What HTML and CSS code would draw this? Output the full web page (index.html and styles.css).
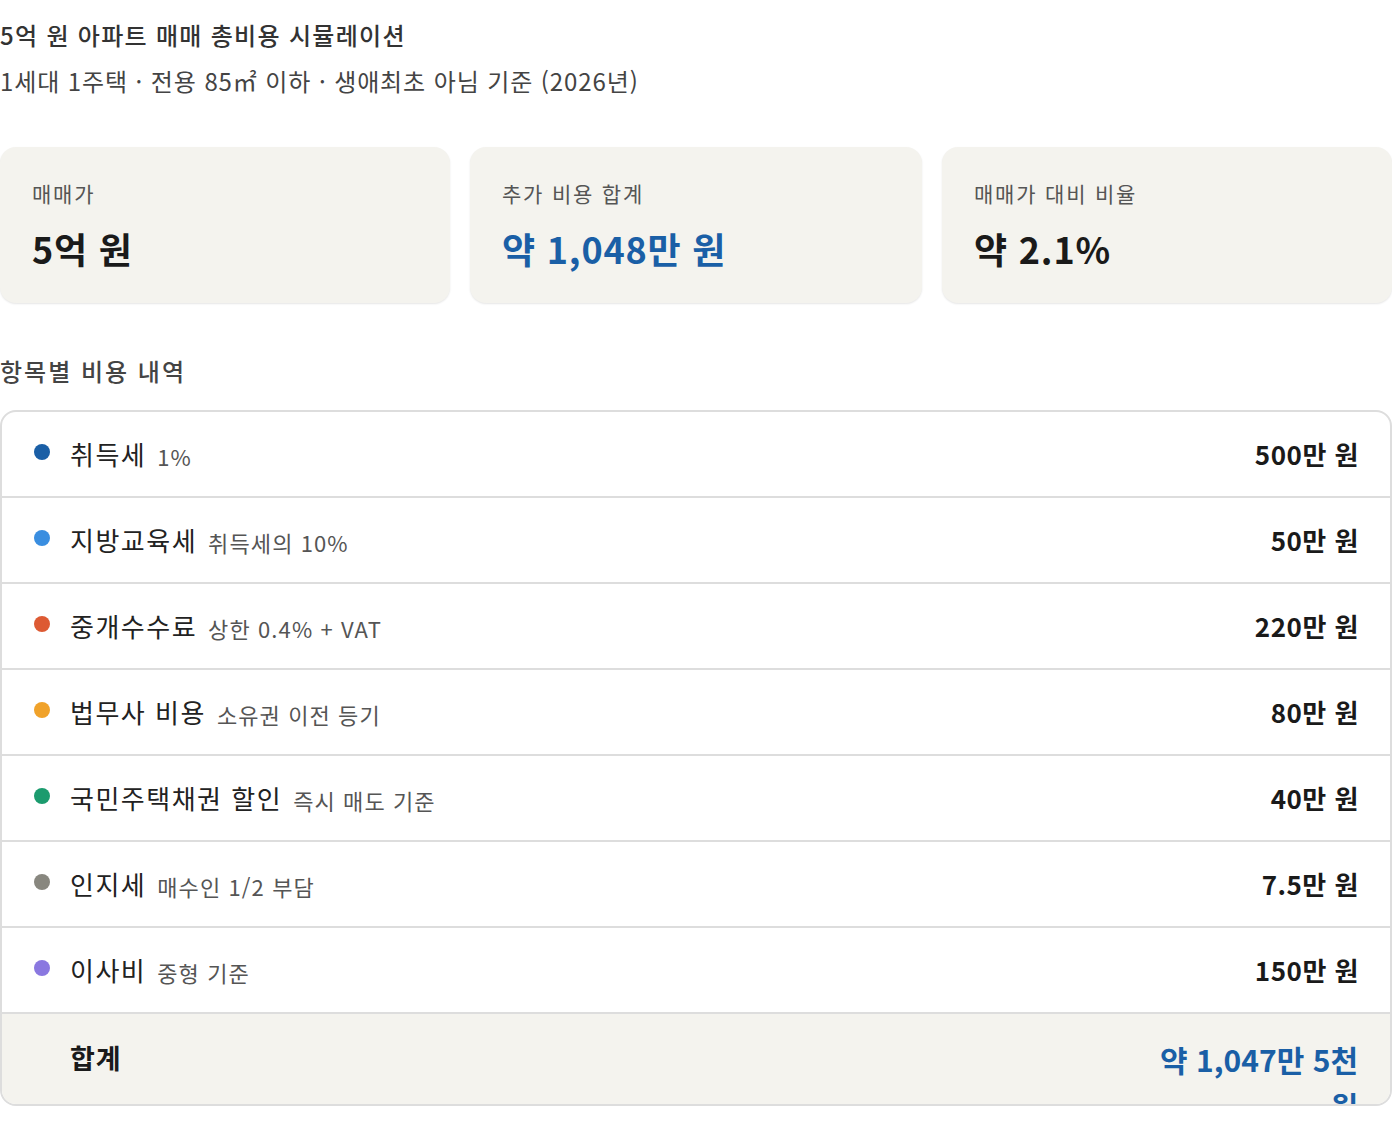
FILE: index.html
```html
<!DOCTYPE html>
<html lang="ko">
<head>
<meta charset="utf-8">
<title>5억 원 아파트 매매 총비용 시뮬레이션</title>
<link rel="stylesheet" href="styles.css">
</head>
<body>
<div class="page">
  <h1 class="title">5억 원 아파트 매매 총비용 시뮬레이션</h1>
  <p class="subtitle">1세대 1주택 · 전용 85㎡ 이하 · 생애최초 아님 기준 (2026년)</p>

  <div class="cards">
    <div class="card">
      <div class="card-label">매매가</div>
      <div class="card-value">5억 원</div>
    </div>
    <div class="card">
      <div class="card-label">추가 비용 합계</div>
      <div class="card-value accent">약 1,048만 원</div>
    </div>
    <div class="card">
      <div class="card-label">매매가 대비 비율</div>
      <div class="card-value">약 2.1%</div>
    </div>
  </div>

  <h2 class="section-title">항목별 비용 내역</h2>

  <div class="table">
    <div class="row">
      <span class="dot dot-blue"></span>
      <span class="name">취득세</span>
      <span class="note">1%</span>
      <span class="amount">500만 원</span>
    </div>
    <div class="row">
      <span class="dot dot-sky"></span>
      <span class="name">지방교육세</span>
      <span class="note">취득세의 10%</span>
      <span class="amount">50만 원</span>
    </div>
    <div class="row">
      <span class="dot dot-red"></span>
      <span class="name">중개수수료</span>
      <span class="note">상한 0.4% + VAT</span>
      <span class="amount">220만 원</span>
    </div>
    <div class="row">
      <span class="dot dot-orange"></span>
      <span class="name">법무사 비용</span>
      <span class="note">소유권 이전 등기</span>
      <span class="amount">80만 원</span>
    </div>
    <div class="row">
      <span class="dot dot-green"></span>
      <span class="name">국민주택채권 할인</span>
      <span class="note">즉시 매도 기준</span>
      <span class="amount">40만 원</span>
    </div>
    <div class="row">
      <span class="dot dot-gray"></span>
      <span class="name">인지세</span>
      <span class="note">매수인 1/2 부담</span>
      <span class="amount">7.5만 원</span>
    </div>
    <div class="row">
      <span class="dot dot-purple"></span>
      <span class="name">이사비</span>
      <span class="note">중형 기준</span>
      <span class="amount">150만 원</span>
    </div>
    <div class="row total">
      <span class="total-label">합계</span>
      <span class="total-amount">약 1,047만 5천 원</span>
    </div>
  </div>
</div>
</body>
</html>
```

FILE: styles.css
```css
* { box-sizing: border-box; }

body {
  margin: 0;
  background: #ffffff;
  font-family: "Noto Sans CJK KR", "Noto Sans", sans-serif;
  color: #222;
}

.page {
  padding-top: 18px;
  width: 1392px;
}

.title {
  margin: 0;
  font-size: 24px;
  line-height: 34px;
  font-weight: 500;
  color: #333;
  letter-spacing: 1.3px;
}

.subtitle {
  margin: 12px 0 0;
  font-size: 24px;
  line-height: 34px;
  font-weight: 400;
  color: #444;
  letter-spacing: 0.9px;
}

.cards {
  display: grid;
  grid-template-columns: 450px 452px 450px;
  gap: 20px;
  margin-top: 49px;
}

.card {
  height: 156px;
  background: #f4f3ee;
  border-radius: 16px;
  padding: 31px 32px 0;
  box-shadow: 0 1px 2px rgba(0, 0, 0, 0.1);
}

.card-label {
  font-size: 21px;
  line-height: 30px;
  color: #555;
  letter-spacing: 1.8px;
}

.card-value {
  margin-top: 17px;
  font-size: 36px;
  line-height: 46px;
  font-weight: 700;
  color: #1a1a1a;
  letter-spacing: 0.8px;
}

.card-value.accent { color: #1a5fa6; }

.section-title {
  margin: 52px 0 0;
  font-size: 24px;
  line-height: 32px;
  font-weight: 500;
  color: #444;
  letter-spacing: 2px;
}

.table {
  margin-top: 23px;
  height: 696px;
  border: 2px solid #dddddd;
  border-radius: 16px;
  overflow: hidden;
}

.row {
  display: flex;
  align-items: center;
  height: 86px;
  padding: 0 32px;
  border-bottom: 2px solid #dddddd;
}

.dot {
  width: 16px;
  height: 16px;
  border-radius: 50%;
  flex: none;
  margin-right: 20px;
  margin-top: -4px;
}

.dot-blue { background: #1a5fa6; }
.dot-sky { background: #3a8ee0; }
.dot-red { background: #dd5a33; }
.dot-orange { background: #f0a22a; }
.dot-green { background: #1b9b6e; }
.dot-gray { background: #88877f; }
.dot-purple { background: #8a78e0; }

.name {
  font-size: 26px;
  line-height: 36px;
  color: #222;
  letter-spacing: 1.5px;
}

.note {
  margin-left: 11px;
  font-size: 22px;
  line-height: 36px;
  color: #555;
  letter-spacing: 1.1px;
  padding-top: 4px;
}

.amount {
  margin-left: auto;
  margin-right: -1px;
  font-size: 26px;
  line-height: 36px;
  font-weight: 700;
  color: #1a1a1a;
  letter-spacing: 0.5px;
}

.row.total {
  height: 92px;
  border-bottom: none;
  background: #f4f3ee;
  align-items: flex-start;
  padding-top: 22px;
  padding-left: 68px;
}

.total-label {
  font-size: 27px;
  line-height: 44px;
  font-weight: 700;
  color: #1a1a1a;
  letter-spacing: 1px;
}

.total-amount {
  margin-left: auto;
  width: 220px;
  text-align: right;
  font-size: 30px;
  line-height: 46px;
  font-weight: 700;
  color: #1a5fa6;
}
```
